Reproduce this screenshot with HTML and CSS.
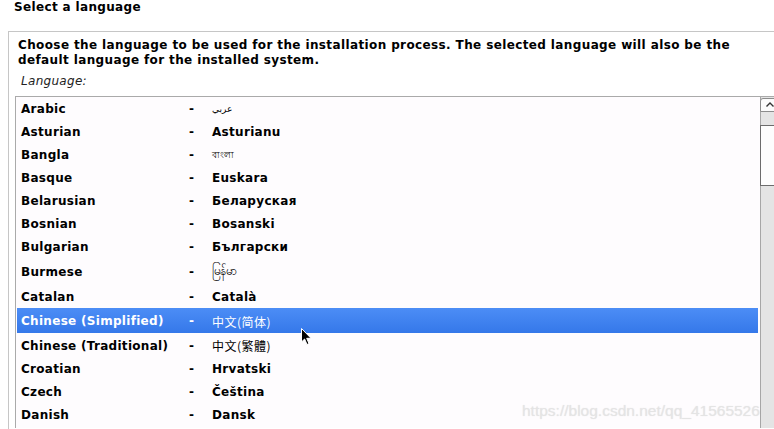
FILE: index.html
```html
<!DOCTYPE html>
<html>
<head>
<meta charset="utf-8">
<link rel="stylesheet" href="styles.css">
</head>
<body>
<div class="title">Select a language</div>
<div class="panel">
  <p class="desc">Choose the language to be used for the installation process. The selected language will also be the<br>default language for the installed system.</p>
  <div class="label">Language:</div>
  <div class="listbox">
    <div class="list">
      <div class="row"><span class="name">Arabic</span><span class="dash">-</span><span class="native small" lang="ar">عربي</span></div>
      <div class="row"><span class="name">Asturian</span><span class="dash">-</span><span class="native">Asturianu</span></div>
      <div class="row"><span class="name">Bangla</span><span class="dash">-</span><span class="native small" lang="bn">বাংলা</span></div>
      <div class="row"><span class="name">Basque</span><span class="dash">-</span><span class="native">Euskara</span></div>
      <div class="row"><span class="name">Belarusian</span><span class="dash">-</span><span class="native">Беларуская</span></div>
      <div class="row"><span class="name">Bosnian</span><span class="dash">-</span><span class="native">Bosanski</span></div>
      <div class="row"><span class="name">Bulgarian</span><span class="dash">-</span><span class="native">Български</span></div>
      <div class="row h26"><span class="name">Burmese</span><span class="dash">-</span><span class="native burmese" lang="my">မြန်မာ</span></div>
      <div class="row h24"><span class="name">Catalan</span><span class="dash">-</span><span class="native">Català</span></div>
      <div class="row h25 selected"><span class="name">Chinese (Simplified)</span><span class="dash">-</span><span class="native cjk-sc" lang="zh-CN">中文(简体)</span></div>
      <div class="row h24"><span class="name">Chinese (Traditional)</span><span class="dash">-</span><span class="native cjk-tc" lang="zh-TW">中文(繁體)</span></div>
      <div class="row"><span class="name">Croatian</span><span class="dash">-</span><span class="native">Hrvatski</span></div>
      <div class="row"><span class="name">Czech</span><span class="dash">-</span><span class="native">Čeština</span></div>
      <div class="row"><span class="name">Danish</span><span class="dash">-</span><span class="native">Dansk</span></div>
    </div>
    <div class="scrollbar">
      <div class="sb-up">
        <svg class="sb-arrow" width="8" height="5" viewBox="0 0 8 5"><path d="M0.5 4.5 L4 1 L7.5 4.5" fill="none" stroke="#333" stroke-width="1.4"/></svg>
      </div>
      <div class="sb-gap"></div>
      <div class="sb-thumb"></div>
      <div class="sb-rest"></div>
    </div>
  </div>
</div>
<svg class="cursor" width="12" height="18" viewBox="0 0 12 18"><path d="M0.5 0.5 L0.5 14 L3.6 11 L6 16.5 L8 15.6 L5.7 10.3 L10 10.3 Z" fill="#000" stroke="#fff" stroke-width="1"/></svg>
<div class="watermark">https://blog.csdn.net/qq_41565526</div>
</body>
</html>
```

FILE: styles.css
```css
html, body {
  margin: 0;
  padding: 0;
  background: #ffffff;
}
body {
  width: 774px;
  height: 429px;
  overflow: hidden;
  position: relative;
  font-family: "DejaVu Sans", "Noto Sans CJK SC", sans-serif;
  font-size: 12px;
  color: #000;
}
.title {
  font-weight: bold;
  line-height: 15px;
  padding-left: 14px;
  height: 15px;
  letter-spacing: 0.35px;
}
.panel {
  margin-top: 16px;
  margin-left: 8px;
  width: 820px;
  height: 398px;
  border-top: 1px solid #c6c6c6;
  border-left: 1px solid #c6c6c6;
  padding: 6px 0 0 6px;
  box-sizing: border-box;
}
.desc {
  margin: 0;
  padding-left: 3px;
  font-weight: bold;
  line-height: 14.5px;
  letter-spacing: 0.38px;
}
.label {
  margin-top: 7px;
  padding-left: 6px;
  font-style: italic;
  line-height: 15px;
  color: #222;
  letter-spacing: 0.3px;
}
.listbox {
  margin-top: 7px;
  width: 800px;
  height: 332px;
  border-top: 1px solid #aaaaaa;
  border-left: 1px solid #aaaaaa;
  background: #fefcfe;
  display: flex;
  box-sizing: border-box;
}
.list {
  width: 741px;
  margin-left: 1px;
  flex: none;
}
.row {
  display: grid;
  grid-template-columns: 167px 24px 1fr;
  align-items: center;
  height: 23px;
  padding: 1px 0 0 4px;
  box-sizing: border-box;
  font-weight: bold;
  white-space: nowrap;
  letter-spacing: 0.3px;
}
.row.h24 { height: 24px; }
.row.h25 { height: 25px; }
.row.h26 { height: 26px; }
.row.selected {
  background: linear-gradient(#4c8df6, #3578e9);
  color: #ffffff;
}
.dash {
  padding-left: 1px;
}
.native.small {
  font-weight: normal;
  font-size: 9px;
}
.native.burmese {
  font-weight: normal;
  font-size: 12px;
}
.native.cjk-sc {
  font-family: "Noto Sans CJK SC", sans-serif;
  font-weight: normal;
  font-size: 12px;
  letter-spacing: 0.5px;
}
.native.cjk-tc {
  font-family: "Noto Sans CJK TC", sans-serif;
  font-weight: normal;
  font-size: 12px;
  letter-spacing: 0.5px;
}
.scrollbar {
  margin-left: 2px;
  width: 16px;
  display: flex;
  flex-direction: column;
  border-left: 1px solid #a6a6a6;
  background: #e4e4e4;
  flex: none;
}
.sb-up {
  margin-top: 1px;
  margin-left: -1px;
  height: 14px;
  box-sizing: border-box;
  border: 1px solid #8c8c8c;
  border-radius: 3px 0 0 0;
  background: #fbfbfb;
  display: flex;
  justify-content: flex-start;
  padding: 3px 0 0 5px;
}
.sb-arrow {
  display: block;
}
.sb-gap {
  height: 13px;
}
.sb-thumb {
  height: 61px;
  margin-left: -1px;
  box-sizing: border-box;
  border: 1px solid #6c6c6c;
  background: #fdfdfd;
}
.sb-rest {
  flex: 1;
}
.cursor {
  position: absolute;
  left: 301px;
  top: 328px;
}
.watermark {
  position: absolute;
  left: 522px;
  top: 402px;
  font-family: "Liberation Sans", Arial, sans-serif;
  font-size: 15.5px;
  color: rgba(228, 228, 228, 0.85);
  text-shadow: 0 0 1px rgba(120, 120, 120, 0.2);
  white-space: nowrap;
}
```
